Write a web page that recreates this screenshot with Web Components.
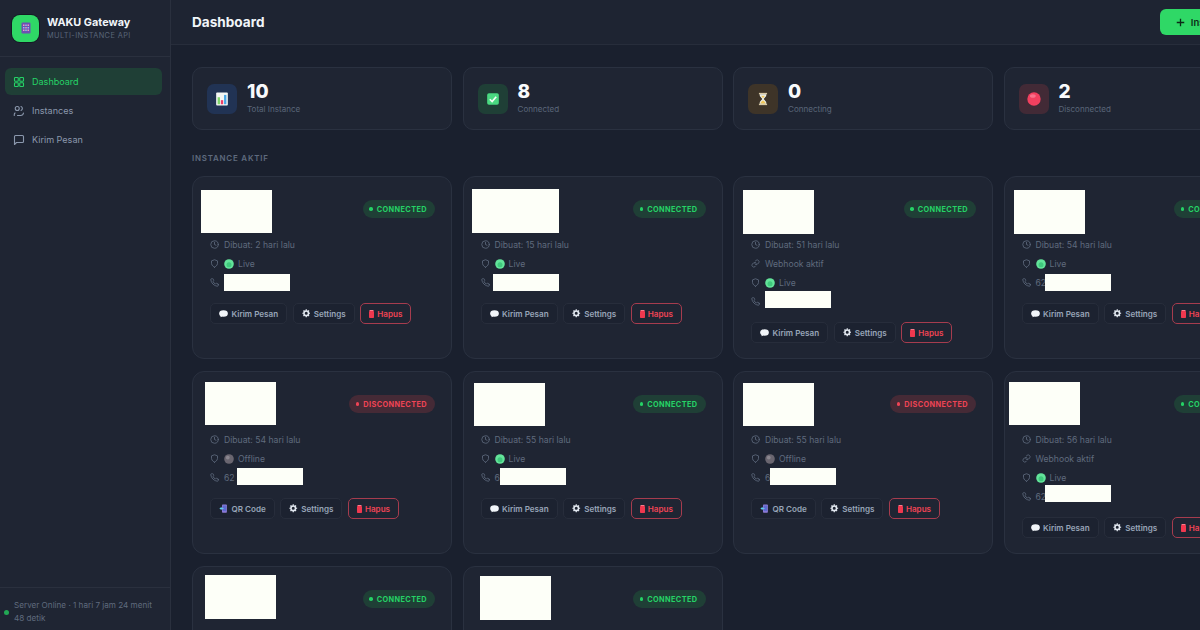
<!DOCTYPE html>
<html lang="id">
<head>
<meta charset="utf-8">
<title>WAKU Gateway</title>
<style>
  html, body { margin: 0; height: 100%; background: #1a202e; overflow: hidden; }
  body { font-family: Inter, "Liberation Sans", sans-serif; color: #e2e8f0; }
</style>
</head>
<body>
<app-shell>
  <side-bar slot="side">
    <nav-item active icon="grid">Dashboard</nav-item>
    <nav-item icon="users">Instances</nav-item>
    <nav-item icon="chat">Kirim Pesan</nav-item>
  </side-bar>
  <top-bar slot="top">Dashboard</top-bar>

  <stat-row slot="stats">
    <stat-card value="10" label="Total Instance" icon="chart" tone="blue"></stat-card>
    <stat-card value="8" label="Connected" icon="check" tone="green"></stat-card>
    <stat-card value="0" label="Connecting" icon="hourglass" tone="amber"></stat-card>
    <stat-card value="2" label="Disconnected" icon="red" tone="red"></stat-card>
  </stat-row>

  <section-title slot="title">INSTANCE AKTIF</section-title>

  <card-grid slot="grid">
    <instance-card status="connected" created="2 hari lalu" mode="Live" name-box="9,14,71,43" phone-box="32,98,66,17"></instance-card>
    <instance-card status="connected" created="15 hari lalu" mode="Live" name-box="9,13,87,44" phone-box="30,98,66,17"></instance-card>
    <instance-card status="connected" created="51 hari lalu" mode="Live" webhook name-box="10,14,71,44" phone-box="32,115,66,17"></instance-card>
    <instance-card status="connected" created="54 hari lalu" mode="Live" phone="62" name-box="10,14,71,44" phone-box="41,98,66,17"></instance-card>

    <instance-card status="disconnected" created="54 hari lalu" mode="Offline" phone="62" name-box="13,11,71,43" phone-box="45,97,66,17"></instance-card>
    <instance-card status="connected" created="55 hari lalu" mode="Live" phone="6" name-box="11,12,71,43" phone-box="37,97,66,17"></instance-card>
    <instance-card status="disconnected" created="55 hari lalu" mode="Offline" phone="6" name-box="10,12,71,43" phone-box="37,97,66,17"></instance-card>
    <instance-card status="connected" created="56 hari lalu" mode="Live" webhook phone="62" name-box="5,11,71,43" phone-box="41,114,66,17"></instance-card>

    <instance-card status="connected" created="56 hari lalu" mode="Live" name-box="13,9,71,44"></instance-card>
    <instance-card status="connected" created="57 hari lalu" mode="Live" name-box="17,10,71,44"></instance-card>
  </card-grid>
</app-shell>

<script>
// stroke icons shared by the nav and the info rows
const ICONS = {
  grid: '<rect x="3" y="3" width="7.5" height="7.5" rx="1.5"/><rect x="13.5" y="3" width="7.5" height="7.5" rx="1.5"/><rect x="3" y="13.5" width="7.5" height="7.5" rx="1.5"/><rect x="13.5" y="13.5" width="7.5" height="7.5" rx="1.5"/>',
  users: '<circle cx="8.500" cy="7" r="4"/><path d="M2.500 21v-1.500a5 5 0 0 1 1.500-3.500"/><path d="M16 3.200a4 4 0 0 1 0 7.600"/><path d="M9 21h6a6 6 0 0 0 6-5"/>',
  chat: '<path d="M21 15a2 2 0 0 1-2 2H7l-4 4V5a2 2 0 0 1 2-2h14a2 2 0 0 1 2 2z"/>',
  clock: '<circle cx="12" cy="12" r="10"/><path d="M12 6v6l4 2"/>',
  shield: '<path d="M12 22s8-4 8-10V5l-8-3-8 3v7c0 6 8 10 8 10z"/>',
  link: '<path d="M10 13a5 5 0 0 0 7.5.5l3-3a5 5 0 0 0-7-7l-1.700 1.700"/><path d="M14 11a5 5 0 0 0-7.500-.5l-3 3a5 5 0 0 0 7 7l1.700-1.700"/>',
  phone: '<path d="M22 16.900v3a2 2 0 0 1-2.200 2 19.800 19.800 0 0 1-8.600-3.100 19.500 19.500 0 0 1-6-6A19.800 19.800 0 0 1 2.100 4.200 2 2 0 0 1 4.100 2h3a2 2 0 0 1 2 1.700c.1 1 .4 1.900.7 2.800a2 2 0 0 1-.5 2.100L8.100 9.900a16 16 0 0 0 6 6l1.300-1.300a2 2 0 0 1 2.100-.4c.9.3 1.800.6 2.800.7a2 2 0 0 1 1.700 2z"/>'
};

// filled pictograms, drawn to stand in for the emoji of the original
const PICTOS = {
  chart: '<rect x="2" y="1" width="20" height="22" rx="1.500" fill="#f4f7f5"/><rect x="4.500" y="9" width="4" height="12" fill="#7ed66b"/><rect x="10" y="14" width="4" height="7" fill="#ef3f68"/><rect x="15.500" y="5" width="4" height="16" fill="#4aa8e8"/>',
  check: '<rect x="2" y="2" width="20" height="20" rx="3" fill="#4ad981"/><path d="M6.500 12.500l4 4 7-8.500" fill="none" stroke="#f4fff7" stroke-width="2.800"/>',
  hourglass: '<rect x="5" y="1.500" width="14" height="2.600" fill="#d8c9a4"/><rect x="5" y="19.900" width="14" height="2.600" fill="#d8c9a4"/><path d="M6.500 4h11v3l-4.300 5 4.300 5v3h-11v-3l4.300-5-4.300-5z" fill="#eef2ee"/><path d="M8 17.500l4-3.500 4 3.500v2H8z" fill="#f0c659"/><path d="M8.500 6.500h7l-3.500 4z" fill="#f0c659"/>',
  red: '<circle cx="12" cy="12" r="11.500" fill="#f2405f"/><ellipse cx="10" cy="7" rx="5" ry="3" fill="#f9718a"/>',
  bubble: '<ellipse cx="12" cy="12" rx="11.500" ry="8.500" fill="#f1f5f9"/><path d="M5 18l-1.500 4 6-2.500z" fill="#f1f5f9"/>',
  gear: '<circle cx="12" cy="12" r="6.500" fill="none" stroke="#e2e8f0" stroke-width="4.500"/><path d="M12 1v4M12 19v4M1 12h4M19 12h4M4.200 4.200l2.800 2.800M17 17l2.800 2.800M19.800 4.200L17 7M7 17l-2.800 2.800" stroke="#e2e8f0" stroke-width="3.500"/>',
  qr: '<rect x="8" y="1" width="13" height="22" rx="2" fill="#8e7bd6"/><rect x="10" y="4" width="9" height="15" fill="#5c6ad0"/><path d="M1 12l6-4.500v3h5v3H7v3z" fill="#5ec9ea"/>',
  live: '<circle cx="12" cy="12" r="11.500" fill="#63e49a"/><circle cx="12" cy="14" r="6" fill="#3fc97d"/>',
  off: '<circle cx="12" cy="12" r="11.500" fill="#6a6670"/><circle cx="9" cy="8.500" r="4.500" fill="#8b8790"/>',
  mobile: '<rect x="3" y="1" width="18" height="22" rx="2.500" fill="#6f4fb3"/><g fill="#f09cc0"><rect x="6" y="5" width="3" height="3"/><rect x="10.500" y="5" width="3" height="3" fill="#8fc6f0"/><rect x="15" y="5" width="3" height="3"/><rect x="6" y="10" width="3" height="3" fill="#8fc6f0"/><rect x="10.500" y="10" width="3" height="3"/><rect x="15" y="10" width="3" height="3" fill="#8fc6f0"/><rect x="6" y="15" width="3" height="3"/><rect x="10.500" y="15" width="3" height="3" fill="#8fc6f0"/><rect x="15" y="15" width="3" height="3"/></g>'
};

const stroke = (name, size) =>
  `<svg width="${size}" height="${size}" viewBox="0 0 24 24" fill="none" stroke="currentColor" stroke-width="2.200" stroke-linecap="round" stroke-linejoin="round">${ICONS[name]}</svg>`;
const picto = (name, size) =>
  `<svg width="${size}" height="${size}" viewBox="0 0 24 24">${PICTOS[name]}</svg>`;

class AppShell extends HTMLElement {
  constructor() {
    super();
    this.attachShadow({ mode: "open" }).innerHTML = `
      <style>
        :host { display: flex; height: 630px; width: 1200px; overflow: hidden; }
        .main { flex: none; width: 1121px; display: flex; flex-direction: column; }
        .body { flex: none; padding: 22px 21px 0; }
      </style>
      <slot name="side"></slot>
      <div class="main">
        <slot name="top"></slot>
        <div class="body">
          <slot name="stats"></slot>
          <slot name="title"></slot>
          <slot name="grid"></slot>
        </div>
      </div>`;
  }
}

class SideBar extends HTMLElement {
  constructor() {
    super();
    this.attachShadow({ mode: "open" }).innerHTML = `
      <style>
        :host { display: flex; flex-direction: column; flex: none; width: 171px; height: 630px; box-sizing: border-box;
                background: #1f2533; border-right: 1px solid #2a303e; }
        .brand { display: flex; align-items: center; gap: 8px; height: 57px; box-sizing: border-box; padding: 0 12px;
                 border-bottom: 1px solid #2a303e; }
        .logo { flex: none; width: 27px; height: 27px; border-radius: 8px; background: #2fd866; display: flex; align-items: center;
                justify-content: center; box-shadow: 0 0 0 1px #141a24; }
        .name { font-size: 10.850px; font-weight: 700; color: #f1f5f9; line-height: 14px; }
        .sub { font-size: 7.350px; letter-spacing: .42px; color: #5a6679; line-height: 11px; margin-top: 1px; white-space: nowrap; }
        nav { flex: 1; display: flex; flex-direction: column; gap: 2px; padding: 11px 8px 0 5px; }
        .foot { display: flex; align-items: center; gap: 5px; height: 43px; box-sizing: border-box; padding: 5px 6px 0 4px;
                border-top: 1px solid #2a303e; font-size: 8.150px; line-height: 13px; color: #5f6b7e; }
        .dot { flex: none; width: 5px; height: 5px; border-radius: 50%; background: #22a855; margin-top: 2px; }
      </style>
      <div class="brand">
        <div class="logo">${picto("mobile", 12)}</div>
        <div><div class="name">WAKU Gateway</div><div class="sub">MULTI-INSTANCE API</div></div>
      </div>
      <nav><slot></slot></nav>
      <div class="foot"><span class="dot"></span><span>Server Online · 1 hari 7 jam 24 menit 48 detik</span></div>`;
  }
}

class NavItem extends HTMLElement {
  constructor() {
    super();
    const icon = this.getAttribute("icon");
    this.attachShadow({ mode: "open" }).innerHTML = `
      <style>
        :host { display: flex; align-items: center; gap: 7px; height: 27px; padding: 0 8px; border-radius: 6px;
                font-size: 9.050px; color: #8b98ad; }
        :host([active]) { background: #1f3f36; color: #25d366; }
        svg { flex: none; display: block; }
      </style>
      ${stroke(icon, 12)}<slot></slot>`;
  }
}

class TopBar extends HTMLElement {
  constructor() {
    super();
    this.attachShadow({ mode: "open" }).innerHTML = `
      <style>
        :host { flex: none; display: flex; align-items: center; justify-content: space-between; height: 45px; box-sizing: border-box;
                padding: 0 22px 0 21px; background: #1e2432; border-bottom: 1px solid #272d3b; }
        .title { font-size: 13.600px; font-weight: 700; color: #f1f5f9; }
        button { display: flex; align-items: center; gap: 6px; height: 26px; padding: 0 16px; border: 0; border-radius: 6px;
                 background: #2fd866; color: #0c2a18; font: 600 9.500px Inter, "Liberation Sans", sans-serif; white-space: nowrap; }
      </style>
      <div class="title"><slot></slot></div>
      <button><svg width="9" height="9" viewBox="0 0 24 24" stroke="currentColor" stroke-width="3.500"><path d="M12 2v20M2 12h20"/></svg>Instance Baru</button>`;
  }
}

class StatRow extends HTMLElement {
  constructor() {
    super();
    this.attachShadow({ mode: "open" }).innerHTML = `
      <style>:host { display: grid; grid-template-columns: repeat(4, 260px); column-gap: 10.500px; }</style>
      <slot></slot>`;
  }
}

class StatCard extends HTMLElement {
  constructor() {
    super();
    this.attachShadow({ mode: "open" }).innerHTML = `
      <style>
        :host { display: flex; align-items: center; gap: 10px; height: 63px; box-sizing: border-box; padding: 0 14px;
                background: #1f2533; border: 1px solid #2a3140; border-radius: 10px; }
        .icon { flex: none; width: 30px; height: 30px; border-radius: 7px; display: flex; align-items: center; justify-content: center; }
        :host([tone=blue]) .icon { background: #213354; }
        :host([tone=green]) .icon { background: #1f3f36; }
        :host([tone=amber]) .icon { background: #3e3428; }
        :host([tone=red]) .icon { background: #422a36; }
        .text { padding-bottom: 2px; }
        .value { font-size: 19px; font-weight: 800; line-height: 22px; color: #f8fafc; }
        .label { font-size: 8.050px; line-height: 12px; color: #5a6679; }
      </style>
      <div class="icon">${picto(this.getAttribute("icon"), 14)}</div>
      <div class="text"><div class="value">${this.getAttribute("value")}</div><div class="label">${this.getAttribute("label")}</div></div>`;
  }
}

class SectionTitle extends HTMLElement {
  constructor() {
    super();
    this.attachShadow({ mode: "open" }).innerHTML = `
      <style>
        :host { display: block; margin: 23px 0 12px; font-size: 7.900px; line-height: 11px; font-weight: 600;
                letter-spacing: .8px; color: #5f6b7e; }
      </style>
      <slot></slot>`;
  }
}

class CardGrid extends HTMLElement {
  constructor() {
    super();
    this.attachShadow({ mode: "open" }).innerHTML = `
      <style>:host { display: grid; grid-template-columns: repeat(4, 260px); column-gap: 10.500px; row-gap: 12px; }</style>
      <slot></slot>`;
  }
}

class InstanceCard extends HTMLElement {
  constructor() {
    super();
    const up = this.getAttribute("status") === "connected";
    // the blanked-out names and numbers lie over the card; values are from the card's outer corner
    const box = (attr) => {
      const v = this.getAttribute(attr);
      if (!v) return "";
      const [x, y, w, h] = v.split(",").map(Number);
      return `<div class="redact" style="left:${x - 1}px;top:${y - 1}px;width:${w}px;height:${h}px"></div>`;
    };
    this.attachShadow({ mode: "open" }).innerHTML = `
      <style>
        :host { display: block; position: relative; box-sizing: border-box; min-height: 183px; padding: 16px 16px 15px 17px;
                background: #1f2533; border: 1px solid #2a3140; border-radius: 12px; }
        .head { display: flex; justify-content: flex-end; align-items: center; height: 32px; margin-bottom: 10px; }
        .badge { display: flex; align-items: center; gap: 4px; height: 18px; padding: 0 8px 0 6.500px; border-radius: 9px;
                 font-size: 7.300px; font-weight: 700; letter-spacing: .42px; }
        .badge.on { background: #1f3f36; color: #25d366; }
        .badge.off { background: #452a36; color: #ef4455; }
        .badge i { width: 3.500px; height: 3.500px; border-radius: 50%; background: currentColor; }
        .row { display: flex; align-items: center; gap: 5px; height: 19px; font-size: 8.650px; color: #5f6b7e; }
        .row svg { flex: none; display: block; }
        .state { display: flex; align-items: center; gap: 4px; }
        .actions { display: flex; gap: 5.500px; margin-top: 11px; }
        .btn { display: flex; align-items: center; gap: 3.500px; height: 21px; box-sizing: border-box; padding: 0 8px;
               border: 1px solid #272d3b; border-radius: 5px; background: #1c2230; color: #98a5b8;
               font-size: 8.100px; font-weight: 600; white-space: nowrap; }
        .btn.del { border-color: #a63c4e; background: transparent; color: #ef4455; gap: 3px; }
        .redact { position: absolute; background: #fdfff8; }
      </style>
      <div class="head">
        <div class="badge ${up ? "on" : "off"}"><i></i>${up ? "CONNECTED" : "DISCONNECTED"}</div>
      </div>
      <div class="row">${stroke("clock", 9)}<span>Dibuat: ${this.getAttribute("created")}</span></div>
      ${this.hasAttribute("webhook") ? `<div class="row">${stroke("link", 9)}<span>Webhook aktif</span></div>` : ""}
      <div class="row">${stroke("shield", 9)}<span class="state">${picto(up ? "live" : "off", 10)}${this.getAttribute("mode")}</span></div>
      <div class="row">${stroke("phone", 9)}<span>${this.getAttribute("phone") || ""}</span></div>
      <div class="actions">
        <div class="btn">${up ? picto("bubble", 9) : picto("qr", 9)}${up ? "Kirim Pesan" : "QR Code"}</div>
        <div class="btn">${picto("gear", 8.500)}Settings</div>
        <div class="btn del"><svg width="5" height="8" viewBox="0 0 10 16"><rect y="2" width="10" height="14" rx="1.500" fill="#f0384f"/><rect x="1" width="8" height="2" fill="#f9798a"/></svg>Hapus</div>
      </div>
      ${box("name-box")}${box("phone-box")}`;
  }
}

customElements.define("app-shell", AppShell);
customElements.define("side-bar", SideBar);
customElements.define("nav-item", NavItem);
customElements.define("top-bar", TopBar);
customElements.define("stat-row", StatRow);
customElements.define("stat-card", StatCard);
customElements.define("section-title", SectionTitle);
customElements.define("card-grid", CardGrid);
customElements.define("instance-card", InstanceCard);
</script>
</body>
</html>
